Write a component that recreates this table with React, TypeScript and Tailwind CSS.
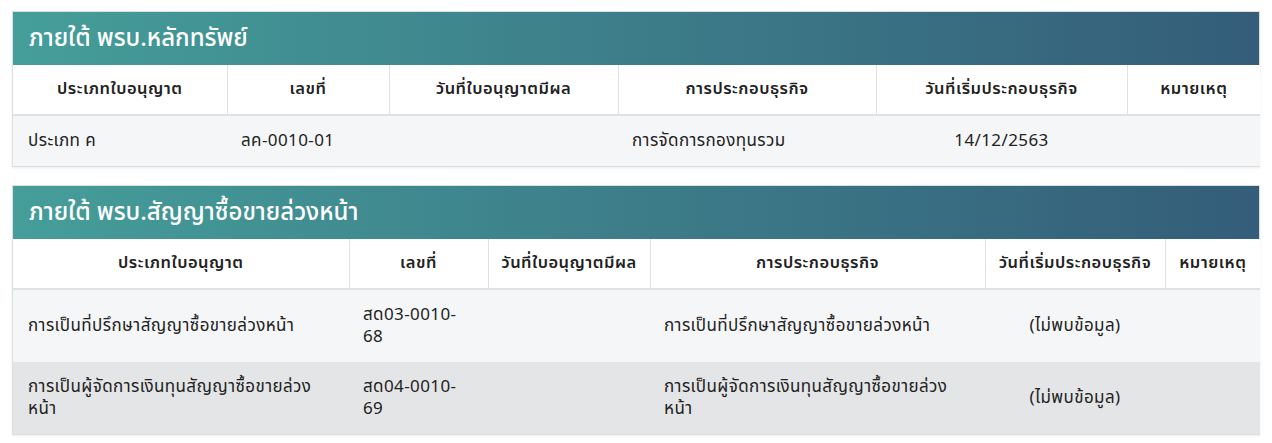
const font = { fontFamily: '"Noto Sans Thai", "Noto Sans", "Liberation Sans", sans-serif' };

type Table = {
  title: string;
  widths: number[];
  rows: { cells: string[]; bg: string }[];
};

const headers = ['ประเภทใบอนุญาต', 'เลขที่', 'วันที่ใบอนุญาตมีผล', 'การประกอบธุรกิจ', 'วันที่เริ่มประกอบธุรกิจ', 'หมายเหตุ'];

const tables: Table[] = [
  {
    title: 'ภายใต้ พรบ.หลักทรัพย์',
    widths: [214, 162, 229, 258, 251, 133],
    rows: [{ cells: ['ประเภท ค', 'ลค-0010-01', '', 'การจัดการกองทุนรวม', '14/12/2563', ''], bg: 'bg-[#f5f6f8]' }],
  },
  {
    title: 'ภายใต้ พรบ.สัญญาซื้อขายล่วงหน้า',
    widths: [336, 139, 162, 335, 180, 95],
    rows: [
      { cells: ['การเป็นที่ปรึกษาสัญญาซื้อขายล่วงหน้า', 'สด03-0010-68', '', 'การเป็นที่ปรึกษาสัญญาซื้อขายล่วงหน้า', '(ไม่พบข้อมูล)', ''], bg: 'bg-[#f5f6f8]' },
      { cells: ['การเป็นผู้จัดการเงินทุนสัญญาซื้อขายล่วงหน้า', 'สด04-0010-69', '', 'การเป็นผู้จัดการเงินทุนสัญญาซื้อขายล่วงหน้า', '(ไม่พบข้อมูล)', ''], bg: 'bg-[#e4e5e6]' },
    ],
  },
];

function LicenseCard({ table }: { table: Table }) {
  return (
    <div className="border border-[#dcdfe2] shadow-[0_1px_2px_rgba(0,0,0,0.08)]">
      <div className="h-[53px] flex items-center px-4 bg-gradient-to-r from-[#459e99] to-[#345d79]">
        <h3 className="text-[24px] font-medium text-white">{table.title}</h3>
      </div>
      <table className="w-full table-fixed border-collapse text-[#222]">
        <colgroup>
          {table.widths.map((w, i) => (
            <col key={i} style={{ width: w }} />
          ))}
        </colgroup>
        <thead>
          <tr className="bg-white border-b-2 border-[#dee2e6]">
            {headers.map((h, i) => (
              <th key={i} className="h-[50px] px-1 text-[16.5px] tracking-[0.5px] font-semibold text-center border-l border-[#dee2e6] first:border-l-0">
                {h}
              </th>
            ))}
          </tr>
        </thead>
        <tbody>
          {table.rows.map((r, ri) => (
            <tr key={ri} className={r.bg}>
              {r.cells.map((c, ci) => (
                <td
                  key={ci}
                  className={`px-[14px] py-[14px] text-[17px] tracking-[0.4px] leading-[22px] align-middle ${ci === 4 ? 'text-center' : 'text-left'} ${ci === 0 ? 'pl-[15px]' : ''}`}
                >
                  {c}
                </td>
              ))}
            </tr>
          ))}
        </tbody>
      </table>
    </div>
  );
}

export default function App() {
  return (
    <div className="w-[1272px] h-[443px] bg-white px-[12px] pt-[11px] flex flex-col gap-[18px]" style={font}>
      {tables.map((t, i) => (
        <LicenseCard key={i} table={t} />
      ))}
    </div>
  );
}
